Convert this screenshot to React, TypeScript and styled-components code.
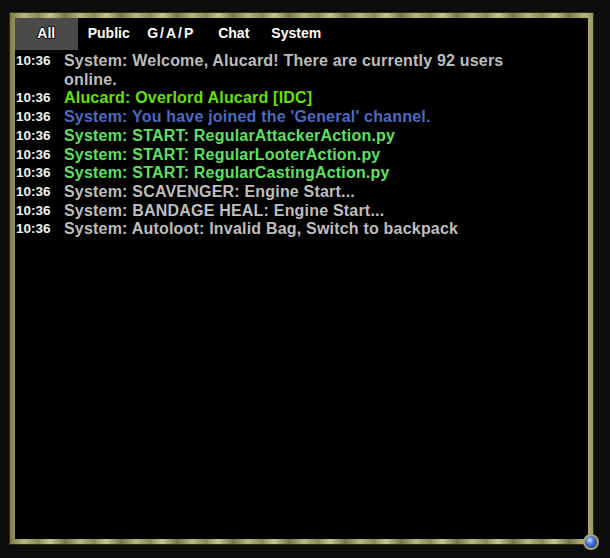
import { Fragment } from 'react';
import styled, { createGlobalStyle } from 'styled-components';

const GlobalStyle = createGlobalStyle`
    html, body {
        margin: 0;
        padding: 0;
        background: #0c0c0c;
    }
`;

const Page = styled.div`
    width: 610px;
    height: 558px;
    padding: 13px 17px 14px 10px;
    box-sizing: border-box;
    background: #0c0c0c;
`;

const Frame = styled.div`
    position: relative;
    height: 100%;
    box-sizing: border-box;
    background: #000;
    border: 5px solid #8e8a54;
    border-image: repeating-linear-gradient(90deg, #7f7b47 0px, #b8b680 14px, #8d8a52 28px, #c6c48e 40px, #76723f 56px) 5;
    box-shadow: 0 0 0 1px #2e2a14;
    display: flex;
    flex-direction: column;
`;

const TabBar = styled.div`
    display: flex;
    height: 32px;
`;

type TabProps = {
    readonly selected?: boolean
}
const Tab = styled.div<TabProps>`
    width: 62.5px;
    display: flex;
    align-items: center;
    justify-content: center;
    background: ${({ selected }) => selected ? '#4a4a4a' : 'transparent'};
    color: #fff;
    font-family: "Liberation Sans", Arial, sans-serif;
    font-weight: bold;
    font-size: 14px;
    padding-bottom: 2px;
    text-shadow: 1px 0 0 #000, -1px 0 0 #000, 0 1px 0 #000, 0 -1px 0 #000;
`;

const SlashTab = styled.span`
    letter-spacing: 2px;
`;

const Log = styled.div`
    display: grid;
    grid-template-columns: 48px 456px;
    padding: 2px 0 0 1px;
    font-family: "Liberation Sans", Arial, sans-serif;
    font-weight: bold;
    line-height: 18.7px;
`;

const Time = styled.div`
    color: #f2f2f2;
    font-size: 13.5px;
`;

const Msg = styled.div<{ color: string }>`
    color: ${({ color }) => color};
    font-size: 16px;
    letter-spacing: 0.2px;
`;

const Gem = styled.div`
    position: absolute;
    right: -11px;
    bottom: -11px;
    width: 12px;
    height: 12px;
    border-radius: 50%;
    background: radial-gradient(circle at 40% 35%, #cfe0ff 0, #4f7be0 35%, #1d3a8e 80%);
    border: 2px solid #a8a46a;
`;

const GREY = '#bdbdbd';
const LIME = '#66e000';
const BLUE = '#4a6ac0';
const GREEN = '#5ee05e';

const lines: [string, string][] = [
    ['System: Welcome, Alucard! There are currently 92 users online.', GREY],
    ['Alucard: Overlord Alucard [IDC]', LIME],
    ["System: You have joined the 'General' channel.", BLUE],
    ['System: START: RegularAttackerAction.py', GREEN],
    ['System: START: RegularLooterAction.py', GREEN],
    ['System: START: RegularCastingAction.py', GREEN],
    ['System: SCAVENGER: Engine Start...', GREY],
    ['System: BANDAGE HEAL: Engine Start...', GREY],
    ['System: Autoloot: Invalid Bag, Switch to backpack', GREY],
];

const tabs = ['All', 'Public', 'G/A/P', 'Chat', 'System'];

export default function App() {
    return (
        <Page>
            <GlobalStyle />
            <Frame>
                <TabBar>
                    {tabs.map((t, i) => (
                        <Tab key={t} selected={i === 0}>
                            {t.includes('/') ? <SlashTab>{t}</SlashTab> : t}
                        </Tab>
                    ))}
                </TabBar>
                <Log>
                    {lines.map(([text, color], i) => (
                        <Fragment key={i}>
                            <Time>10:36</Time>
                            <Msg color={color}>{text}</Msg>
                        </Fragment>
                    ))}
                </Log>
                <Gem />
            </Frame>
        </Page>
    );
}
